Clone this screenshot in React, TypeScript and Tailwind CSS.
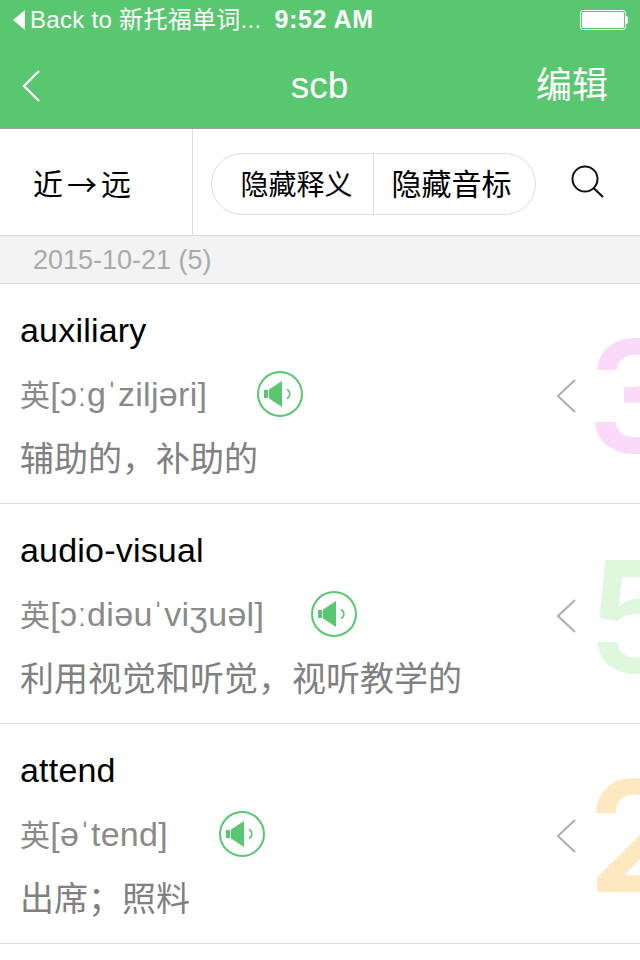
const words = [
  { w: "auxiliary", p: "[ɔːgˈziljəri]", m: "辅助的，补助的", n: "3", c: "text-[#fbd9f8]", g: "gap-[50px]" },
  { w: "audio-visual", p: "[ɔːdiəuˈviʒuəl]", m: "利用视觉和听觉，视听教学的", n: "5", c: "text-[#dff7dc]", g: "gap-[47px]" },
  { w: "attend", p: "[əˈtend]", m: "出席；照料", n: "2", c: "text-[#fde8c0]", g: "gap-[51px]" },
];

function Speaker() {
  return (
    <svg width="46" height="46" viewBox="0 0 46 46" className="shrink-0">
      <circle cx="23" cy="23" r="22" fill="none" stroke="#59c76f" strokeWidth="2" />
      <rect x="7" y="19" width="4" height="8" fill="#59c76f" />
      <path d="M12 18.5 L25 10 V36 L12 27.5 Z" fill="#59c76f" />
      <path d="M30 18.5 A5 5 0 0 1 30 27.5" fill="none" stroke="#59c76f" strokeWidth="1.6" />
    </svg>
  );
}

function Row({ item }: { item: (typeof words)[number] }) {
  return (
    <div className="relative h-[220px] overflow-hidden border-b border-[#dddddd] pl-[20px] pt-[24px]">
      <div className="text-[34px] leading-[44px] tracking-[0.2px] text-black">{item.w}</div>
      <div className={`mt-[19px] flex h-[46px] items-center ${item.g} text-[#8a8a8a]`}>
        <span className="whitespace-nowrap text-[34px] tracking-[0.3px]">
          <span className="text-[30px]">英</span>
          {item.p}
        </span>
        <Speaker />
      </div>
      <div className="mt-[20px] text-[34px] leading-[44px] text-[#808080]">{item.m}</div>
      <svg width="20" height="34" viewBox="0 0 20 34" className="absolute left-[556px] top-[95px]">
        <path d="M19 1 L2 17 L19 33" fill="none" stroke="#b0b0b0" strokeWidth="2.2" />
      </svg>
      <div className={`absolute left-[587px] top-[32px] font-['Inter'] text-[154px] font-semibold leading-[160px] ${item.c}`}>{item.n}</div>
    </div>
  );
}

export default function App() {
  return (
    <div className="h-[960px] w-[640px] overflow-hidden bg-white font-['Liberation_Sans','Noto_Sans_CJK_SC',sans-serif]">
      <div className="h-[129px] border-b border-[#a0a0a0] bg-[#59c76f] text-white">
        <div className="flex h-[40px] items-center pl-[12px] pr-[12px]">
          <svg width="14" height="22" viewBox="0 0 14 22" className="mr-[4px] shrink-0">
            <path d="M13 1 V21 L1 11 Z" fill="#fff" />
          </svg>
          <span className="whitespace-nowrap text-[24px] tracking-[0.3px]">Back to 新托福单词...</span>
          <span className="ml-[13px] whitespace-nowrap text-[25px] font-bold tracking-[0.6px]">9:52 AM</span>
          <div className="ml-auto flex items-center">
            <div className="h-[20px] w-[46px] rounded-[3px] border border-white p-[1px]">
              <div className="h-full w-full rounded-[2px] bg-white" />
            </div>
            <div className="h-[8px] w-[2px] rounded-r-[2px] bg-white" />
          </div>
        </div>
        <div className="flex h-[88px] items-center justify-between pt-[4px] pl-[21px] pr-[32px]">
          <svg width="20" height="32" viewBox="0 0 20 32" className="shrink-0">
            <path d="M18 1 L3 16 L18 31" fill="none" stroke="#fff" strokeWidth="2.4" />
          </svg>
          <span className="ml-[62px] text-[37px]">scb</span>
          <span className="text-[36px]">编辑</span>
        </div>
      </div>

      <div className="flex h-[107px] border-b border-[#dddddd]">
        <div className="flex w-[193px] items-center border-r border-[#dddddd] pl-[33px] pt-[6px] text-[30px] leading-none text-black">
          <span>近</span>
          <span className="font-['Noto_Sans_CJK_SC'] ml-[4px] mr-[4px] -mt-[4px]">→</span>
          <span>远</span>
        </div>
        <div className="flex flex-1 items-center pl-[18px] pt-[4px]">
          <div className="flex h-[62px] w-[325px] items-center rounded-full border border-[#dddddd] text-black">
            <span className="flex h-full w-[162px] items-center justify-center border-r border-[#dddddd] pl-[8px] pt-[3px] text-[28px]">隐藏释义</span>
            <span className="flex h-full flex-1 items-center justify-center pr-[6px] text-[30px]">隐藏音标</span>
          </div>
          <svg width="36" height="36" viewBox="0 0 36 36" className="ml-[34px] mb-[4px] shrink-0">
            <circle cx="15" cy="15" r="12.5" fill="none" stroke="#111" strokeWidth="2" />
            <path d="M23.5 24 L33 33" fill="none" stroke="#111" strokeWidth="2.2" />
          </svg>
        </div>
      </div>

      <div className="flex h-[48px] items-center border-b border-[#dddddd] bg-[#f3f3f3] pl-[33px] pt-[1px] text-[27px] text-[#aaaaaa]">
        2015-10-21 (5)
      </div>

      {words.map((item) => (
        <Row key={item.w} item={item} />
      ))}
    </div>
  );
}
